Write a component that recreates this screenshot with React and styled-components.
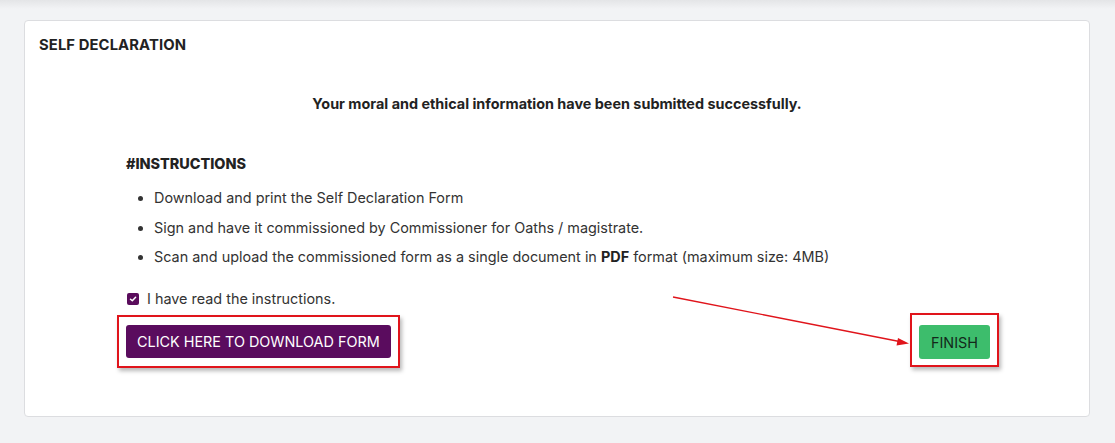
import styled, { createGlobalStyle } from "styled-components";

const GlobalStyle = createGlobalStyle`
  html, body {
    margin: 0;
    padding: 0;
    background: #f2f3f5;
  }
  body {
    font-family: Inter, "Noto Sans", sans-serif;
    color: #212529;
  }
`;

const Page = styled.div`
  min-height: 443px;
  box-sizing: border-box;
  padding: 20px 25px 26px 24px;
  background: linear-gradient(#e4e5e7 0, #f2f3f5 9px, #f2f3f5 100%);
`;

const Card = styled.div`
  position: relative;
  background: #fff;
  border: 1px solid #dcdde0;
  border-radius: 4px;
  height: 397px;
  box-sizing: border-box;
`;

const CardHeader = styled.div`
  padding: 15px 14px 0;
  font-size: 14.8px;
  font-weight: 700;
  letter-spacing: 0.1px;
  color: #222;
  line-height: 18px;
`;

const Body = styled.div`
  padding: 0 99px 0 101px;
`;

const Success = styled.p`
  margin: 41px 0 0;
  text-align: center;
  font-size: 14.4px;
  font-weight: 700;
  line-height: 18px;
  color: #222;
`;

const Heading = styled.h4`
  margin: 42px 0 0;
  font-size: 14.4px;
  font-weight: 800;
  line-height: 18px;
  color: #222;
`;

const List = styled.ul`
  margin: 16px 0 0;
  padding-left: 28px;
  li {
    font-size: 14.4px;
    line-height: 18px;
    margin-bottom: 11.5px;
    color: #333;
  }
  b {
    font-weight: 700;
    color: #222;
  }
`;

const CheckRow = styled.label`
  display: flex;
  align-items: center;
  gap: 8px;
  margin-top: 24px;
  margin-left: 1px;
  font-size: 14.4px;
  line-height: 18px;
  color: #333;
`;

const Box = styled.span`
  width: 12px;
  height: 12px;
  border-radius: 2px;
  background: #5a0c5c;
  display: flex;
  align-items: center;
  justify-content: center;
`;

const Actions = styled.div`
  display: flex;
  justify-content: space-between;
  align-items: flex-start;
  margin-top: 17px;
`;

const Button = styled.button`
  position: relative;
  border: none;
  border-radius: 3px;
  height: ${(p) => (p.$green ? "34px" : "33px")};
  padding: 0 ${(p) => (p.$green ? "12px" : "11px")};
  font-family: Inter, "Noto Sans", sans-serif;
  font-size: 14.4px;
  background: ${(p) => (p.$green ? "#3dbd6c" : "#5a0c5e")};
  color: ${(p) => (p.$green ? "#13281a" : "#fff")};
  cursor: pointer;
  &::after {
    content: "";
    position: absolute;
    left: -9px;
    right: -9px;
    top: ${(p) => (p.$green ? "-12px" : "-10px")};
    bottom: ${(p) => (p.$green ? "-8px" : "-10px")};
    border: 2px solid #e0141b;
    box-shadow: 2px 3px 4px rgba(0, 0, 0, 0.28);
    pointer-events: none;
  }
`;

const Arrow = styled.svg`
  position: absolute;
  left: -248px;
  top: -30px;
  overflow: visible;
  pointer-events: none;
`;

function CheckIcon() {
  return (
    <svg width="8" height="8" viewBox="0 0 8 8">
      <path d="M1.5 4.2 L3.3 5.8 L6.6 2.3" fill="none" stroke="#fff" strokeWidth="1.5" strokeLinecap="round" strokeLinejoin="round" />
    </svg>
  );
}

export default function App() {
  return (
    <Page>
      <GlobalStyle />
      <Card>
        <CardHeader>SELF DECLARATION</CardHeader>
        <Success>Your moral and ethical information have been submitted successfully.</Success>
        <Body>
          <Heading>#INSTRUCTIONS</Heading>
          <List>
            <li>Download and print the Self Declaration Form</li>
            <li>Sign and have it commissioned by Commissioner for Oaths / magistrate.</li>
            <li>
              Scan and upload the commissioned form as a single document in <b>PDF</b> format (maximum size: 4MB)
            </li>
          </List>
          <CheckRow>
            <Box>
              <CheckIcon />
            </Box>
            I have read the instructions.
          </CheckRow>
          <Actions>
            <Button>CLICK HERE TO DOWNLOAD FORM</Button>
            <Button $green>
              FINISH
              <Arrow width="240" height="60" viewBox="0 0 240 60">
                <path d="M2 2 L231 47" stroke="#e0141b" strokeWidth="1.4" fill="none" />
                <path d="M238 48.5 L227 43 L225.5 50.5 Z" fill="#e0141b" />
              </Arrow>
            </Button>
          </Actions>
        </Body>
      </Card>
    </Page>
  );
}
